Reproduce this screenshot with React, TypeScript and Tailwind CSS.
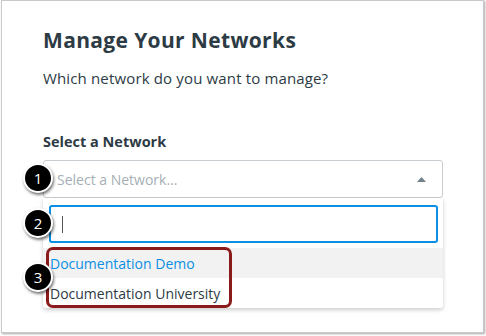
import React from "react";

const Badge = ({ n, top }: { n: number; top: string }) => (
  <div
    className={`absolute left-[21px] ${top} w-[30px] h-[30px] rounded-full bg-black border-2 border-white shadow-[1px_2px_3px_rgba(0,0,0,0.55)] flex items-center justify-center text-white text-[15px] font-['Open_Sans',sans-serif]`}
  >
    {n}
  </div>
);

export default function App() {
  return (
    <div className="w-[486px] h-[336px] bg-white font-['Open_Sans',sans-serif]">
      <div className="relative ml-px w-[483px] h-[333px] border border-[#c9c9c9] bg-white shadow-[1px_1px_2px_rgba(0,0,0,0.35)] pl-[41px] pt-[26px]">
        <h1 className="text-[21px] leading-[26px] font-bold tracking-[0.35px] text-[#2d3b45]">Manage Your Networks</h1>
        <p className="mt-[15px] text-[15px] leading-[20px] tracking-[0.15px] text-[#2d3b45]">Which network do you want to manage?</p>
        <div className="mt-[44px] text-[14.5px] leading-[20px] font-bold text-[#2d3b45]">Select a Network</div>
        <div className="mt-[8px] w-[400px] h-[38px] border border-[#c7cdd1] rounded-[3px] flex items-center justify-between pl-[13px] pr-[16px]">
          <span className="text-[14px] text-[#a5afb5]">Select a Network...</span>
          <svg width="9" height="5" viewBox="0 0 9 5">
            <path d="M0 5 L4.5 0 L9 5 Z" fill="#73818c" />
          </svg>
        </div>
        <div className="w-[400px] bg-white rounded-b-[3px] shadow-[0_2px_4px_rgba(0,0,0,0.2)] pt-[7px]">
          <div className="ml-[6px] mr-[5px] h-[38px] border-2 border-[#0a8fe4] rounded-[3px] flex items-center pl-[11px]">
            <div className="w-px h-[17px] bg-[#555]" />
          </div>
          <div className="mt-[5px] h-[30px] bg-[#f2f2f2] flex items-center pl-[7px] text-[14px] text-[#0a8fe4]">
            Documentation Demo
          </div>
          <div className="h-[30px] flex items-center pl-[7px] text-[14px] text-[#2d3b45]">
            Documentation University
          </div>
        </div>
        <div className="absolute left-[44px] top-[246px] w-[186px] h-[61px] border-[3px] border-[#8b1a1a] rounded-[7px]" />
        <Badge n={1} top="top-[162px]" />
        <Badge n={2} top="top-[207px]" />
        <Badge n={3} top="top-[261px]" />
      </div>
    </div>
  );
}
